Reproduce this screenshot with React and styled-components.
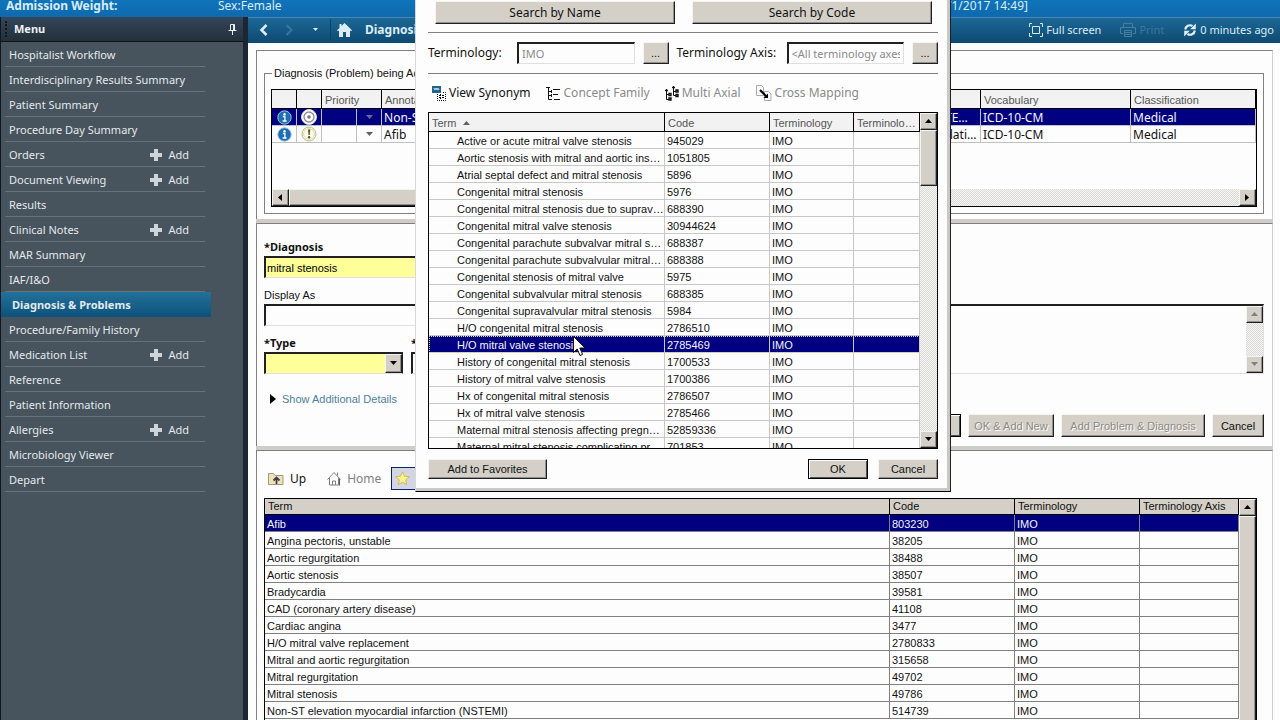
import React from 'react';
import styled, { createGlobalStyle, css } from 'styled-components';

const menuItems = [
  { name: 'Hospitalist Workflow' },
  { name: 'Interdisciplinary Results Summary' },
  { name: 'Patient Summary' },
  { name: 'Procedure Day Summary' },
  { name: 'Orders', add: true },
  { name: 'Document Viewing', add: true },
  { name: 'Results' },
  { name: 'Clinical Notes', add: true },
  { name: 'MAR Summary' },
  { name: 'IAF/I&O' },
  { name: 'Diagnosis & Problems', active: true },
  { name: 'Procedure/Family History' },
  { name: 'Medication List', add: true },
  { name: 'Reference' },
  { name: 'Patient Information' },
  { name: 'Allergies', add: true },
  { name: 'Microbiology Viewer' },
  { name: 'Depart' },
];

const searchResults = [
  ['Active or acute mitral valve stenosis', '945029'],
  ['Aortic stenosis with mitral and aortic insufficiency', '1051805'],
  ['Atrial septal defect and mitral stenosis', '5896'],
  ['Congenital mitral stenosis', '5976'],
  ['Congenital mitral stenosis due to supravalvular ring', '688390'],
  ['Congenital mitral valve stenosis', '30944624'],
  ['Congenital parachute subvalvar mitral stenosis', '688387'],
  ['Congenital parachute subvalvular mitral stenosis', '688388'],
  ['Congenital stenosis of mitral valve', '5975'],
  ['Congenital subvalvular mitral stenosis', '688385'],
  ['Congenital supravalvular mitral stenosis', '5984'],
  ['H/O congenital mitral stenosis', '2786510'],
  ['H/O mitral valve stenosis', '2785469'],
  ['History of congenital mitral stenosis', '1700533'],
  ['History of mitral valve stenosis', '1700386'],
  ['Hx of congenital mitral stenosis', '2786507'],
  ['Hx of mitral valve stenosis', '2785466'],
  ['Maternal mitral stenosis affecting pregnancy', '52859336'],
  ['Maternal mitral stenosis complicating pregnancy', '701853'],
];

const favorites = [
  ['Afib', '803230'],
  ['Angina pectoris, unstable', '38205'],
  ['Aortic regurgitation', '38488'],
  ['Aortic stenosis', '38507'],
  ['Bradycardia', '39581'],
  ['CAD (coronary artery disease)', '41108'],
  ['Cardiac angina', '3477'],
  ['H/O mitral valve replacement', '2780833'],
  ['Mitral and aortic regurgitation', '315658'],
  ['Mitral regurgitation', '49702'],
  ['Mitral stenosis', '49786'],
  ['Non-ST elevation myocardial infarction (NSTEMI)', '514739'],
];

const Arrow = ({ dir = 'down', color = '#000' }) => {
  const points = { down: '0,1 7,1 3.5,5', up: '0,5 7,5 3.5,1', left: '5,0 5,7 1,3.5', right: '1,0 1,7 5,3.5' };
  return (
    <svg width='7' height='7' viewBox='0 0 7 7' aria-hidden='true'>
      <polygon points={points[dir]} fill={color} />
    </svg>
  );
};

const InfoIcon = () => (
  <svg width='15' height='15' viewBox='0 0 15 15' aria-hidden='true'>
    <circle cx='7.5' cy='7.5' r='6.7' fill='#1d6fb4' stroke='#9cc3e2' />
    <circle cx='7.5' cy='4.2' r='1.2' fill='#fff' />
    <path d='M5.8 6.5h2.1v4.2M5.6 11h4' stroke='#fff' strokeWidth='1.3' fill='none' />
  </svg>
);

const TargetIcon = () => (
  <svg width='16' height='16' viewBox='0 0 16 16' aria-hidden='true'>
    <circle cx='8' cy='8' r='7.5' fill='#fff' stroke='#ddd' />
    <circle cx='8' cy='8' r='5' fill='none' stroke='#8d8d8d' strokeWidth='1.3' />
    <circle cx='8' cy='8' r='1.8' fill='#777' />
  </svg>
);

const AlertIcon = () => (
  <svg width='16' height='16' viewBox='0 0 16 16' aria-hidden='true'>
    <circle cx='8' cy='8' r='7' fill='#fdfde6' stroke='#b9b98a' />
    <circle cx='8' cy='8' r='5.4' fill='none' stroke='#dcdcae' />
    <path d='M7 3.5h2.2L8.7 9H7.5z' fill='#55553a' />
    <circle cx='8.1' cy='11.3' r='1.2' fill='#55553a' />
  </svg>
);

const PinIcon = () => (
  <svg width='9' height='11' viewBox='0 0 9 11' fill='none' stroke='#e8eef2' aria-hidden='true'>
    <path d='M2.5 6V.5h4V6M5.5 1v5M.5 6.5h8M4.5 7v4' />
  </svg>
);

const PlusIcon = () => (
  <svg width='12' height='12' viewBox='0 0 12 12' aria-hidden='true'>
    <path d='M4 0h4v4h4v4H8v4H4V8H0V4h4z' fill='#cdd5da' />
  </svg>
);

const HomeIcon = () => (
  <svg width='15' height='14' viewBox='0 0 15 14' aria-hidden='true'>
    <path d='M7.5 0L15 7.3l-1 1L13 7.4V14H9V9H6v5H2V7.4l-1 .9-1-1L2.5 5V1h2v2z' fill='#dcecf6' />
  </svg>
);

const FullScreenIcon = () => (
  <svg width='14' height='14' viewBox='0 0 14 14' fill='none' stroke='#d6e8f2' aria-hidden='true'>
    <path d='M.5 4V.5H3M11 .5h2.5V4M.5 10v3.5H3M11 13.5h2.5V10M3.5 3.5h7v7h-7z' />
  </svg>
);

const PrintIcon = () => (
  <svg width='16' height='14' viewBox='0 0 16 14' fill='none' stroke='#477f9f' aria-hidden='true'>
    <path d='M3.5 4V.5h9V4M3 10.5H.5v-6h15v6H13M4.5 7.5h7v6h-7zM5 9.5h6M5 11.5h6' />
  </svg>
);

const RefreshIcon = () => (
  <svg width='14' height='14' viewBox='0 0 14 14' aria-hidden='true'>
    <path d='M2.2 6.5A4.8 4.8 0 0 1 9.5 3' stroke='#e2f0f8' strokeWidth='2.2' fill='none' />
    <path d='M11.8 7.5A4.8 4.8 0 0 1 4.5 11' stroke='#e2f0f8' strokeWidth='2.2' fill='none' />
    <path d='M12.8.5v5.8H7.2zM1.2 13.5V7.7h5.6z' fill='#e2f0f8' />
  </svg>
);

const UpFolderIcon = () => (
  <svg width='16' height='14' viewBox='0 0 16 14' aria-hidden='true'>
    <path d='M.5 12.5v-11h5l1.5 2h8v9z' fill='#efe3b4' stroke='#a09a84' />
    <path d='M8.5 12V6M5.5 8.5l3-3 3 3' stroke='#3e3a52' strokeWidth='1.8' fill='none' />
  </svg>
);

const HouseIcon = () => (
  <svg width='14' height='15' viewBox='0 0 14 15' fill='none' stroke='#808080' aria-hidden='true'>
    <path d='M.5 8.5L7 1.5l6.5 7M2.5 7v7h9V7M10.5 4.5v-3M5.5 14v-4h3v4' />
    <path d='M12.5 8v6.5' stroke='#555' />
  </svg>
);

const StarIcon = () => (
  <svg width='15' height='15' viewBox='0 0 15 15' aria-hidden='true'>
    <path d='M7.5.8l2 4.4 4.8.5-3.6 3.2 1 4.8-4.2-2.5-4.2 2.5 1-4.8L.7 5.7l4.8-.5z' fill='#fbf08c' stroke='#cdbb62' />
  </svg>
);

const SynonymIcon = () => (
  <svg width='14' height='15' viewBox='0 0 14 15' fill='none' aria-hidden='true'>
    <path d='M0 0h9v7H0z' fill='#1f6791' />
    <path d='M2 2l1 2 1-2 1 2 1-2 1 2' stroke='#c9e3f0' />
    <path d='M5.5 8v6.5h8V6.5H10' stroke='#000' strokeDasharray='1 1' />
    <path d='M7 9.5h5M7 11.5h5M8.5 8v5' stroke='#000' strokeDasharray='2 1' />
  </svg>
);

const FamilyIcon = () => (
  <svg width='15' height='15' viewBox='0 0 15 15' fill='none' stroke='#111' aria-hidden='true'>
    <path d='M0 1.5h4M2.5 2v11.5H6M3 5.5h3M3 9.5h3M7 3.5h7M7 8.5h5M8 13.5h6M5.5 4v3M5.5 8v3' />
  </svg>
);

const AxialIcon = () => (
  <svg width='14' height='15' viewBox='0 0 14 15' fill='none' stroke='#111' aria-hidden='true'>
    <path d='M1.5 3v10.5H4M2 8.5h2M8.5 0v9.5H11M9 5.5h2' />
    <path d='M0 4.5h3M7 1.5h3M4 7.5h2v2H4zM4 12h2v2H4zM11 4h2v2h-2zM11 8.5h2v2h-2z' strokeWidth='1.4' />
  </svg>
);

const MappingIcon = () => (
  <svg width='16' height='16' viewBox='0 0 16 16' fill='none' stroke='#aaa' aria-hidden='true'>
    <path d='M.5.5h5l2 2v8h-7zM8.5 6.5h4l2.5 2.5v6.5h-6.5z' fill='#fafafa' />
    <path d='M4 5l6 6' stroke='#000' strokeWidth='2' />
    <path d='M12 13V8.5L7.5 13z' fill='#000' stroke='none' />
  </svg>
);

const VerticalScroll = ({ thumb, muted, label }) => (
  <ScrollColumn>
    <ScrollButton type='button' aria-label={`${label} up`} disabled={muted}>
      <Arrow dir='up' color={muted ? '#808080' : '#000'} />
    </ScrollButton>
    {thumb && <ScrollThumb $size={thumb} />}
    <ScrollTrack />
    <ScrollButton type='button' aria-label={`${label} down`} disabled={muted}>
      <Arrow dir='down' color={muted ? '#808080' : '#000'} />
    </ScrollButton>
  </ScrollColumn>
);

const Sidebar = () => (
  <Side>
    <SideHeader>
      <Grip />
      <SideTitle>Menu</SideTitle>
      <PinIcon />
    </SideHeader>
    <MenuList>
      {menuItems.map(item => (
        <MenuItem key={item.name} $active={item.active}>
          <MenuLink href='#'>{item.name}</MenuLink>
          {item.add && (
            <AddButton type='button' aria-label={`Add ${item.name}`}>
              <PlusIcon />
              Add
            </AddButton>
          )}
        </MenuItem>
      ))}
    </MenuList>
  </Side>
);

const ProblemTable = () => (
  <ProblemGroup>
    <legend>Diagnosis (Problem) being Addressed this Visit</legend>
    <ProblemBox>
      <DataTable $line='#c0c0c0' $segoe>
        <colgroup>
          <Col $w={25} />
          <Col $w={25} />
          <Col $w={35} />
          <Col $w={25} />
          <Col />
          <Col $w={92} />
          <Col $w={150} />
          <Col $w={125} />
        </colgroup>
        <thead>
          <tr>
            <HeadCell />
            <HeadCell />
            <HeadCell colSpan={2}>Priority</HeadCell>
            <HeadCell>Annotated Display</HeadCell>
            <HeadCell>Name</HeadCell>
            <HeadCell>Vocabulary</HeadCell>
            <HeadCell>Classification</HeadCell>
          </tr>
        </thead>
        <tbody>
          <Row $selected>
            <IconCell><InfoIcon /></IconCell>
            <IconCell><TargetIcon /></IconCell>
            <Cell />
            <IconCell><Arrow color='#6a6a90' /></IconCell>
            <Cell>Non-ST elevation (NSTEMI)</Cell>
            <Cell>Acute, NSTEMI event</Cell>
            <Cell>ICD-10-CM</Cell>
            <Cell>Medical</Cell>
          </Row>
          <Row>
            <IconCell><InfoIcon /></IconCell>
            <IconCell><AlertIcon /></IconCell>
            <Cell />
            <IconCell><Arrow color='#606060' /></IconCell>
            <Cell>Afib</Cell>
            <Cell>Atrial fibrillation</Cell>
            <Cell>ICD-10-CM</Cell>
            <Cell>Medical</Cell>
          </Row>
        </tbody>
      </DataTable>
      <ScrollRow>
        <ScrollButton type='button' aria-label='Scroll left'>
          <Arrow dir='left' />
        </ScrollButton>
        <WideThumb />
        <ScrollTrack />
        <ScrollButton type='button' aria-label='Scroll right'>
          <Arrow dir='right' />
        </ScrollButton>
      </ScrollRow>
    </ProblemBox>
  </ProblemGroup>
);

const DiagnosisForm = () => (
  <Panel $form>
    <FormColumns>
      <FieldColumn>
        <FieldLabel htmlFor='diagnosis' $bold>*Diagnosis</FieldLabel>
        <TextField id='diagnosis' defaultValue='mitral stenosis' $required />
        <FieldLabel htmlFor='display'>Display As</FieldLabel>
        <TextField id='display' />
        <SplitFields>
          <div>
            <FieldLabel htmlFor='type' $bold>*Type</FieldLabel>
            <SelectFrame>
              <TypeSelect id='type' defaultValue=''>
                <option value='' />
              </TypeSelect>
              <SelectArrow><Arrow /></SelectArrow>
            </SelectFrame>
          </div>
          <div>
            <FieldLabel htmlFor='date' $bold>*Date</FieldLabel>
            <TextField id='date' />
          </div>
        </SplitFields>
      </FieldColumn>
      <CommentColumn>
        <FieldLabel htmlFor='comments'>Comments</FieldLabel>
        <CommentFrame>
          <CommentText id='comments' />
          <VerticalScroll label='Scroll comments' muted />
        </CommentFrame>
      </CommentColumn>
    </FormColumns>
    <Details>
      <svg width='6' height='10' viewBox='0 0 6 10' aria-hidden='true'>
        <polygon points='0,0 6,5 0,10' />
      </svg>
      <DetailsLink href='#'>Show Additional Details</DetailsLink>
    </Details>
    <ButtonRow>
      <Button type='button' $w={60} $primary>OK</Button>
      <Button type='button' $w={86} disabled>OK &amp; Add New</Button>
      <Button type='button' $w={144} disabled>Add Problem &amp; Diagnosis</Button>
      <Button type='button' $w={52}>Cancel</Button>
    </ButtonRow>
  </Panel>
);

const Favorites = () => (
  <Panel $last>
    <FolderBar>
      <FolderButton type='button'><UpFolderIcon />Up</FolderButton>
      <FolderButton type='button' disabled><HouseIcon />Home</FolderButton>
      <FolderButton type='button' $pressed><StarIcon />Favorites</FolderButton>
    </FolderBar>
    <FavoritesBox>
      <DataTable $line='#808080'>
        <colgroup>
          <Col />
          <Col $w={125} />
          <Col $w={125} />
          <Col $w={99} />
        </colgroup>
        <thead>
          <tr>
            <HeadCell $grey>Term</HeadCell>
            <HeadCell $grey>Code</HeadCell>
            <HeadCell $grey>Terminology</HeadCell>
            <HeadCell $grey>Terminology Axis</HeadCell>
          </tr>
        </thead>
        <tbody>
          {favorites.map(([term, code], i) => (
            <Row key={code} $selected={i === 0}>
              <Cell>{term}</Cell>
              <Cell>{code}</Cell>
              <Cell>IMO</Cell>
              <Cell />
            </Row>
          ))}
        </tbody>
      </DataTable>
      <ScrollColumn>
        <ScrollButton type='button' aria-label='Scroll favorites up'>
          <Arrow dir='up' />
        </ScrollButton>
        <ScrollThumb />
      </ScrollColumn>
    </FavoritesBox>
  </Panel>
);

const SearchDialog = () => (
  <Dialog role='dialog' aria-label='Diagnosis Search'>
    <SearchButtons>
      <Button type='button' $segoe>Search by Name</Button>
      <Button type='button' $segoe>Search by Code</Button>
    </SearchButtons>
    <Filters>
      <FilterLabel htmlFor='terminology' $w={89}>Terminology:</FilterLabel>
      <FilterInput id='terminology' defaultValue='IMO' disabled />
      <Button type='button' $w={26} aria-label='Choose terminology'>...</Button>
      <FilterLabel htmlFor='axis' $w={110}>Terminology Axis:</FilterLabel>
      <FilterInput id='axis' defaultValue='<All terminology axes>' disabled />
      <Button type='button' $w={26} aria-label='Choose terminology axis'>...</Button>
    </Filters>
    <ToolRow>
      <ToolButton type='button'><SynonymIcon />View Synonym</ToolButton>
      <ToolButton type='button' disabled><FamilyIcon />Concept Family</ToolButton>
      <ToolButton type='button' disabled><AxialIcon />Multi Axial</ToolButton>
      <ToolButton type='button' disabled><MappingIcon />Cross Mapping</ToolButton>
    </ToolRow>
    <ResultsBox>
      <DataTable $line='#c8c8c8'>
        <colgroup>
          <Col />
          <Col $w={105} />
          <Col $w={84} />
          <Col $w={66} />
        </colgroup>
        <thead>
          <tr>
            <HeadCell>
              Term <SortMark><Arrow dir='up' color='#606060' /></SortMark>
            </HeadCell>
            <HeadCell>Code</HeadCell>
            <HeadCell>Terminology</HeadCell>
            <HeadCell>Terminology Axis</HeadCell>
          </tr>
        </thead>
        <tbody>
          {searchResults.map(([term, code]) => (
            <Row key={code} $selected={code === '2785469'} $focus={code === '2785469'}>
              <Cell $indent>{term}</Cell>
              <Cell>{code}</Cell>
              <Cell>IMO</Cell>
              <Cell />
            </Row>
          ))}
        </tbody>
      </DataTable>
      <VerticalScroll label='Scroll results' thumb={56} />
    </ResultsBox>
    <DialogFooter>
      <Button type='button' $w={119}>Add to Favorites</Button>
      <FooterEnd>
        <Button type='button' $w={60} $primary>OK</Button>
        <Button type='button' $w={60}>Cancel</Button>
      </FooterEnd>
    </DialogFooter>
    <Pointer width='13' height='21' viewBox='0 0 13 21' aria-hidden='true'>
      <path d='M.5.5v16l3.7-3.6 2.8 6.6 2.6-1.1-2.8-6.4h5.2z' fill='#fff' stroke='#111' />
    </Pointer>
  </Dialog>
);

const App = () => {
  return (
    <Page>
      <GlobalStyle />
      <Banner>
        <BannerName>Admission Weight:</BannerName>
        <span>Sex:Female</span>
        <BannerVisit>[Admit Date: 9/1/2017 14:49]</BannerVisit>
      </Banner>
      <Body>
        <Sidebar />
        <Main>
          <NavBar>
            <NavButton type='button' aria-label='Back'>
              <svg width='9' height='12' viewBox='0 0 9 12'>
                <path d='M7.5 1L2.5 6l5 5' stroke='#dcecf6' strokeWidth='2.6' fill='none' />
              </svg>
            </NavButton>
            <NavButton type='button' aria-label='Forward' disabled>
              <svg width='9' height='12' viewBox='0 0 9 12'>
                <path d='M1.5 1l5 5-5 5' stroke='#37749a' strokeWidth='2.2' fill='none' />
              </svg>
            </NavButton>
            <NavButton type='button' aria-label='History'>
              <svg width='5' height='3' viewBox='0 0 5 3'>
                <path d='M0 0h5L2.5 3z' fill='#dcecf6' />
              </svg>
            </NavButton>
            <NavHome type='button' aria-label='Home'>
              <HomeIcon />
            </NavHome>
            <NavTitle>Diagnosis &amp; Problems</NavTitle>
            <NavActions>
              <NavAction type='button'><FullScreenIcon />Full screen</NavAction>
              <NavAction type='button' disabled><PrintIcon />Print</NavAction>
              <NavAction type='button'><RefreshIcon />0 minutes ago</NavAction>
            </NavActions>
          </NavBar>
          <Workspace>
            <Panel>
              <ProblemTable />
            </Panel>
            <Splitter />
            <DiagnosisForm />
            <Splitter />
            <Favorites />
          </Workspace>
        </Main>
      </Body>
      <SearchDialog />
    </Page>
  );
};

const sans = `'Liberation Sans', Arial, sans-serif`;
const segoe = `'Noto Sans', 'Open Sans', sans-serif`;

const GlobalStyle = createGlobalStyle`
  * {
    box-sizing: border-box;
  }
  body {
    margin: 0;
    font-family: ${sans};
    font-size: 11px;
    line-height: 16px;
    color: #111;
  }
  button, input, select, textarea {
    margin: 0;
    font: inherit;
  }
  svg {
    display: block;
    flex: none;
  }
`;

const raised = css`
  background-color: #d4d0c8;
  border: 1px solid;
  border-color: #f4f4f0 #202020 #202020 #f4f4f0;
  box-shadow: inset -1px -1px 0 #909090;
`;

const sunken = css`
  background-color: #fdfdfd;
  border: solid;
  border-width: 2px 1px 1px 2px;
  border-color: #202020 #e0e0e0 #e0e0e0 #202020;
`;

const Page = styled.div`
  position: relative;
  display: flex;
  flex-direction: column;
  height: 100vh;
  overflow: hidden;
  background-color: #fdfdfd;
`;

const Banner = styled.header`
  display: flex;
  align-items: flex-end;
  flex: none;
  height: 17px;
  padding: 0 252px 3px 6px;
  overflow: hidden;
  background: linear-gradient(#0f74bb, #0f69ad);
  color: #d9ecf8;
  font-family: ${segoe};
  font-size: 12px;
`;

const BannerName = styled.strong`
  width: 212px;
`;

const BannerVisit = styled.span`
  margin-left: auto;
`;

const Body = styled.div`
  display: flex;
  flex: 1;
  min-height: 0;
`;

const Side = styled.nav`
  flex: none;
  width: 248px;
  border-left: 1px solid #10181f;
  border-right: 5px solid #1c2733;
  background-color: #47535d;
  font-family: ${segoe};
`;

const SideHeader = styled.div`
  display: flex;
  align-items: center;
  height: 25px;
  padding: 0 6px 0 4px;
  border-bottom: 1px solid #0c1218;
  background: linear-gradient(#34465a, #233039);
`;

const Grip = styled.span`
  height: 16px;
  margin-right: 7px;
  border-left: 2px dotted #10181f;
`;

const SideTitle = styled.strong`
  flex: 1;
  color: #eef2f4;
`;

const MenuList = styled.ul`
  margin: 0;
  padding: 0;
  list-style: none;
`;

const MenuItem = styled.li`
  display: flex;
  align-items: center;
  justify-content: space-between;
  width: 200px;
  height: 25px;
  margin-left: 4px;
  padding: 2px 16px 0 4px;
  border-bottom: 1px solid #66717a;
  color: #e4e9ec;
  ${({ $active }) =>
    $active &&
    css`
      width: 210px;
      margin-left: 0;
      padding: 0 0 0 11px;
      border: none;
      background: linear-gradient(#23719a, #0b527c);
      font-weight: bold;
    `}
`;

const MenuLink = styled.a`
  color: inherit;
  text-decoration: none;
  white-space: nowrap;
`;

const AddButton = styled.button`
  display: flex;
  align-items: center;
  gap: 6px;
  padding: 0;
  border: none;
  background: none;
  color: inherit;
`;

const Main = styled.main`
  display: flex;
  flex-direction: column;
  flex: 1;
  min-width: 0;
`;

const NavBar = styled.div`
  display: flex;
  align-items: center;
  flex: none;
  height: 26px;
  padding: 0 6px 2px 4px;
  border-top: 1px solid #4689b4;
  background: linear-gradient(#1c6796, #0d4a71);
  font-family: ${segoe};
`;

const NavButton = styled.button`
  display: flex;
  justify-content: center;
  width: 26px;
  padding: 0 4px 0 0;
  border: none;
  background: none;
`;

const NavHome = styled(NavButton)`
  width: 28px;
  padding: 4px 0;
  margin-right: 7px;
  border-left: 1px solid #0b4264;
`;

const NavTitle = styled.strong`
  color: #dcecf6;
  font-size: 12px;
`;

const NavActions = styled.div`
  display: flex;
  gap: 19px;
  margin-left: auto;
`;

const NavAction = styled.button`
  display: flex;
  align-items: center;
  gap: 3px;
  padding: 0;
  border: none;
  background: none;
  color: #dcecf6;
  &:disabled {
    color: #3d7698;
  }
`;

const Workspace = styled.div`
  display: flex;
  flex-direction: column;
  flex: 1;
  min-height: 0;
  padding: 7px 7px 0 8px;
`;

const Panel = styled.section`
  flex: none;
  padding: 14px 8px 5px 7px;
  border: solid;
  border-width: 1px 1px 0 1px;
  border-color: #808080 #d0d0d0 #808080 #808080;
  ${({ $form }) => $form && 'padding: 15px 8px 9px 7px;'}
  ${({ $last }) =>
    $last &&
    css`
      flex: 1;
      min-height: 0;
      overflow: hidden;
      padding: 16px 15px 0 7px;
    `}
`;

const Splitter = styled.div`
  flex: none;
  height: 4px;
  background-color: #cfcdc9;
`;

const ProblemGroup = styled.fieldset`
  min-width: 0;
  margin: 0;
  padding: 8px 6px 6px;
  border: 1px solid #808080;
  legend {
    margin-left: 1px;
    padding: 0 2px;
  }
`;

const ProblemBox = styled.div`
  display: flex;
  flex-direction: column;
  height: 118px;
  border: 1px solid #000;
`;

const Col = styled.col`
  width: ${({ $w }) => ($w ? `${$w}px` : 'auto')};
`;

const DataTable = styled.table`
  flex: 1;
  width: 100%;
  min-width: 0;
  table-layout: fixed;
  border-collapse: separate;
  border-spacing: 0;
  --line: ${({ $line }) => $line};
  tbody {
    font-family: ${({ $segoe }) => ($segoe ? segoe : sans)};
    font-size: ${({ $segoe }) => ($segoe ? 12 : 11)}px;
  }
  ${ProblemBox} & {
    flex: none;
  }
`;

const HeadCell = styled.th`
  height: ${({ $grey }) => ($grey ? 16 : 19)}px;
  padding: ${({ $grey }) => ($grey ? 0 : 2)}px 3px 0;
  border: solid #000;
  border-width: 0 1px 1px 0;
  background-color: ${({ $grey }) => ($grey ? '#d4d0c8' : '#f2f2f2')};
  color: ${({ $grey }) => ($grey ? '#111' : '#555')};
  font-weight: normal;
  line-height: 15px;
  text-align: left;
  white-space: nowrap;
  overflow: hidden;
  text-overflow: ellipsis;
`;

const Cell = styled.td`
  height: 17px;
  padding: ${({ $indent }) => ($indent ? '2px 0 0 28px' : '2px 3px 0 2px')};
  border: solid var(--line);
  border-width: 0 1px 1px 0;
  line-height: 14px;
  white-space: nowrap;
  overflow: hidden;
  text-overflow: ellipsis;
`;

const IconCell = styled(Cell)`
  padding: 0;
  svg {
    margin: 0 auto;
  }
`;

const Row = styled.tr`
  ${({ $selected }) =>
    $selected &&
    css`
      background-color: #000080;
      color: #f4f4f8;
    `}
  ${({ $focus }) =>
    $focus &&
    css`
      outline: 1px dotted #d8d8a0;
      outline-offset: -1px;
    `}
`;

const SortMark = styled.span`
  display: inline-block;
  margin-left: 3px;
`;

const ScrollColumn = styled.div`
  display: flex;
  flex-direction: column;
  flex: none;
  width: 17px;
`;

const ScrollRow = styled.div`
  display: flex;
  height: 17px;
  margin-top: auto;
`;

const ScrollButton = styled.button`
  ${raised}
  display: flex;
  align-items: center;
  justify-content: center;
  flex: none;
  width: 17px;
  height: 17px;
  padding: 0;
`;

const ScrollThumb = styled.div`
  ${raised}
  flex: ${({ $size }) => ($size ? `0 0 ${$size}px` : '1')};
`;

const WideThumb = styled.div`
  ${raised}
  width: 60%;
`;

const ScrollTrack = styled.div`
  flex: 1;
  background: repeating-conic-gradient(#dcdad6 0 25%, #f4f4f2 0 50%) 0 0 / 2px 2px;
`;

const FormColumns = styled.div`
  display: flex;
  gap: 40px;
`;

const FieldColumn = styled.div`
  flex: none;
  width: 380px;
`;

const FieldLabel = styled.label`
  display: block;
  margin-bottom: 1px;
  ${({ $bold }) =>
    $bold &&
    css`
      font-family: ${segoe};
      font-weight: bold;
    `}
`;

const TextField = styled.input`
  ${sunken}
  display: block;
  width: 100%;
  height: 22px;
  margin-bottom: 9px;
  padding: 0 1px;
  ${({ $required }) => $required && 'background-color: #ffff99;'}
`;

const SplitFields = styled.div`
  display: grid;
  grid-template-columns: 139px 1fr;
  gap: 8px;
`;

const SelectFrame = styled.div`
  ${sunken}
  display: flex;
  height: 22px;
  border-right-color: #202020;
`;

const TypeSelect = styled.select`
  flex: 1;
  min-width: 0;
  border: none;
  border-radius: 0;
  background-color: #ffff99;
  appearance: none;
`;

const SelectArrow = styled.span`
  ${raised}
  display: flex;
  align-items: center;
  justify-content: center;
  width: 17px;
`;

const CommentColumn = styled.div`
  flex: 1;
  padding-top: 48px;
`;

const CommentFrame = styled.div`
  ${sunken}
  display: flex;
  height: 70px;
`;

const CommentText = styled.textarea`
  flex: 1;
  border: none;
  background: none;
  resize: none;
`;

const Details = styled.div`
  display: flex;
  align-items: center;
  gap: 6px;
  margin-top: 8px;
  padding-left: 6px;
`;

const DetailsLink = styled.a`
  color: #4d7f9b;
  text-decoration: none;
`;

const ButtonRow = styled.div`
  display: flex;
  justify-content: flex-end;
  gap: 7px;
  margin-top: 7px;
`;

const Button = styled.button`
  ${raised}
  width: ${({ $w }) => ($w ? `${$w}px` : 'auto')};
  height: 23px;
  padding: 0;
  color: #111;
  white-space: nowrap;
  ${({ $segoe }) => $segoe && `font: 12px ${segoe};`}
  ${({ $primary }) => $primary && 'border-color: #000; box-shadow: inset 1px 1px 0 #fff, inset -1px -1px 0 #505050;'}
  &:disabled {
    color: #8c8a85;
    text-shadow: 1px 1px 0 #fff;
  }
`;

const FolderBar = styled.div`
  display: flex;
  gap: 8px;
  margin-bottom: 8px;
  font-family: ${segoe};
`;

const FolderButton = styled.button`
  display: flex;
  align-items: center;
  gap: 6px;
  height: 23px;
  padding: 0 8px 0 3px;
  border: 1px solid ${({ $pressed }) => ($pressed ? '#0a246a' : 'transparent')};
  background-color: ${({ $pressed }) => ($pressed ? '#d4d5e2' : 'transparent')};
  color: #111;
  font-size: 12px;
  &:disabled {
    padding-right: 1px;
    color: #808080;
  }
`;

const FavoritesBox = styled.div`
  display: flex;
  align-items: flex-start;
  height: 400px;
  border: 1px solid #000;
  ${ScrollColumn} {
    align-self: stretch;
  }
`;

const Dialog = styled.div`
  position: absolute;
  top: 0;
  left: 415px;
  width: 536px;
  padding: 0 12px 8px;
  border: solid;
  border-width: 0 1px 1px 1px;
  border-color: #000 #202020 #000 #d8d8d8;
  background-color: #fdfdfd;
  box-shadow: inset -3px -3px 0 #c9c8c5;
`;

const SearchButtons = styled.div`
  display: grid;
  grid-template-columns: 240px 240px;
  gap: 17px;
  padding: 1px 7px 8px;
`;

const Filters = styled.div`
  display: flex;
  align-items: center;
  gap: 8px;
  padding: 9px 0;
  border: solid #808080;
  border-width: 1px 0;
  button {
    height: 22px;
  }
`;

const FilterLabel = styled.label`
  flex: none;
  width: ${({ $w }) => $w}px;
  margin-right: -8px;
  font-family: ${segoe};
  font-size: 12px;
`;

const FilterInput = styled.input`
  ${sunken}
  flex: 1;
  min-width: 0;
  height: 22px;
  padding: 0 3px;
  color: #8a8a8a;
  font-family: ${segoe};
`;

const ToolRow = styled.div`
  display: flex;
  align-items: center;
  gap: 15px;
  height: 38px;
  padding-left: 4px;
`;

const ToolButton = styled.button`
  display: flex;
  align-items: center;
  gap: 3px;
  padding: 0;
  border: none;
  background: none;
  color: #111;
  font-family: ${segoe};
  font-size: 12px;
  &:disabled {
    color: #8a8a8a;
  }
`;

const ResultsBox = styled.div`
  display: flex;
  align-items: flex-start;
  height: 337px;
  overflow: hidden;
  border: 1px solid #000;
  ${ScrollColumn} {
    align-self: stretch;
  }
`;

const DialogFooter = styled.div`
  display: flex;
  justify-content: space-between;
  padding: 10px 0 4px;
  button {
    height: 20px;
  }
`;

const FooterEnd = styled.div`
  display: flex;
  gap: 10px;
`;

const Pointer = styled.svg`
  position: absolute;
  top: 336px;
  left: 157px;
`;

export default App;
